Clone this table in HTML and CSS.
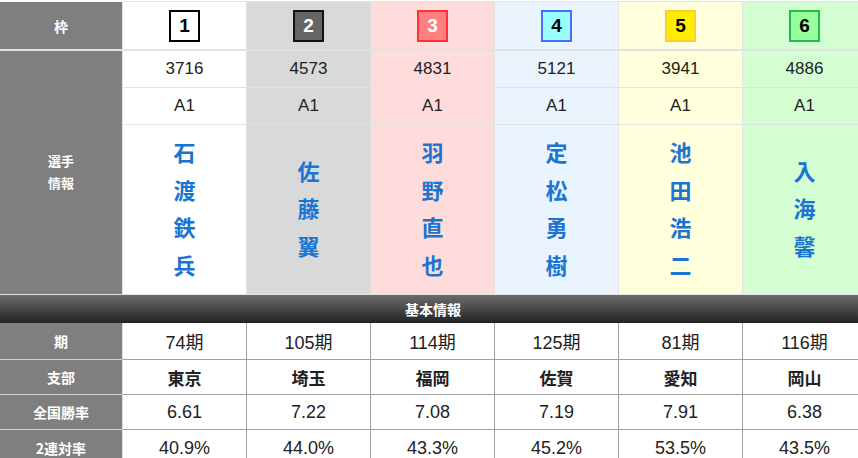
FILE: index.html
```html
<!DOCTYPE html>
<html lang="ja">
<head>
<meta charset="utf-8">
<link rel="stylesheet" href="styles.css">
</head>
<body>
<div class="sheet">
  <div class="lbl head">枠</div>
  <div class="cell head c1"><span class="waku w1">1</span></div>
  <div class="cell head c2"><span class="waku w2">2</span></div>
  <div class="cell head c3"><span class="waku w3">3</span></div>
  <div class="cell head c4"><span class="waku w4">4</span></div>
  <div class="cell head c5"><span class="waku w5">5</span></div>
  <div class="cell head c6"><span class="waku w6">6</span></div>

  <div class="lbl player">選手<br>情報</div>
  <div class="cell sub c1">3716</div>
  <div class="cell sub c2">4573</div>
  <div class="cell sub c3">4831</div>
  <div class="cell sub c4">5121</div>
  <div class="cell sub c5">3941</div>
  <div class="cell sub c6">4886</div>

  <div class="cell sub c1">A1</div>
  <div class="cell sub c2">A1</div>
  <div class="cell sub c3">A1</div>
  <div class="cell sub c4">A1</div>
  <div class="cell sub c5">A1</div>
  <div class="cell sub c6">A1</div>

  <div class="cell name c1"><span class="vert">石渡鉄兵</span></div>
  <div class="cell name c2"><span class="vert">佐藤翼</span></div>
  <div class="cell name c3"><span class="vert">羽野直也</span></div>
  <div class="cell name c4"><span class="vert">定松勇樹</span></div>
  <div class="cell name c5"><span class="vert">池田浩二</span></div>
  <div class="cell name c6"><span class="vert">入海馨</span></div>

  <div class="bar">基本情報</div>

  <div class="lbl low r1">期</div>
  <div class="cell data first r1">74期</div>
  <div class="cell data r1">105期</div>
  <div class="cell data r1">114期</div>
  <div class="cell data r1">125期</div>
  <div class="cell data r1">81期</div>
  <div class="cell data r1">116期</div>

  <div class="lbl low r2">支部</div>
  <div class="cell data first r2 bold">東京</div>
  <div class="cell data r2 bold">埼玉</div>
  <div class="cell data r2 bold">福岡</div>
  <div class="cell data r2 bold">佐賀</div>
  <div class="cell data r2 bold">愛知</div>
  <div class="cell data r2 bold">岡山</div>

  <div class="lbl low r3">全国勝率</div>
  <div class="cell data first r3">6.61</div>
  <div class="cell data r3">7.22</div>
  <div class="cell data r3">7.08</div>
  <div class="cell data r3">7.19</div>
  <div class="cell data r3">7.91</div>
  <div class="cell data r3">6.38</div>

  <div class="lbl low r4">2連対率</div>
  <div class="cell data first r4">40.9%</div>
  <div class="cell data r4">44.0%</div>
  <div class="cell data r4">43.3%</div>
  <div class="cell data r4">45.2%</div>
  <div class="cell data r4">53.5%</div>
  <div class="cell data r4">43.5%</div>
</div>
</body>
</html>
```

FILE: styles.css
```css
html, body {
  margin: 0;
  padding: 0;
  overflow: hidden;
  background: #ffffff;
}

body {
  font-family: "Liberation Sans", Arial, "Noto Sans CJK JP", sans-serif;
  color: #222222;
}

.sheet {
  margin-top: 1px;
  width: 866px;
  display: grid;
  grid-template-columns: 122px repeat(6, 124px);
  grid-template-rows: 50px 37px 37px 170px 28px 37px 35px 35px 37px;
}

.sheet > div {
  box-sizing: border-box;
  display: flex;
  align-items: center;
  justify-content: center;
  text-align: center;
}

.lbl {
  background: #7f7f7f;
  color: #ffffff;
  font-family: "Noto Sans CJK JP", sans-serif;
  font-weight: 700;
  font-size: 13px;
}

.lbl.head {
  border-top: 1px solid #ffffff;
  border-bottom: 2px solid #e2e2e2;
  font-size: 14px;
}

.lbl.player {
  grid-row: span 3;
  line-height: 22px;
  padding-bottom: 2px;
  border-bottom: 1px solid #e2e2e2;
}

.cell {
  border-left: 1px solid #e2e2e2;
}

.cell.head {
  border-top: 1px solid #e2e2e2;
  border-bottom: 2px solid #e2e2e2;
}

.cell.sub {
  font-size: 17px;
  border-bottom: 1px solid #e2e2e2;
}

.cell.name {
  border-bottom: 1px solid #e2e2e2;
  padding-bottom: 3px;
}

.c1 { background: #ffffff; }
.c2 { background: #d9d9d9; }
.c3 { background: #ffdcdc; }
.c4 { background: #eaf4ff; }
.c5 { background: #ffffdc; }
.c6 { background: #d3ffd3; }

.waku {
  box-sizing: border-box;
  width: 31px;
  height: 32px;
  border: 2px solid #000000;
  display: flex;
  align-items: center;
  justify-content: center;
  font-weight: 700;
  font-size: 19px;
  color: #000000;
}

.w1 { background: #ffffff; }
.w2 { background: #666666; color: #ffffff; border-color: #111111; }
.w3 { background: #ff8080; color: #ffffff; border-color: #ff3333; }
.w4 { background: #99ffff; border-color: #4a6cff; }
.w5 { background: #ffee00; border-color: #ffcc33; }
.w6 { background: #99ff99; border-color: #22bb55; }

.vert {
  display: block;
  width: 22px;
  word-break: break-all;
  font-family: "Noto Sans CJK JP", sans-serif;
  font-size: 22px;
  font-weight: 700;
  line-height: 37.5px;
  color: #1a74d2;
}

.bar {
  grid-column: 1 / -1;
  background: linear-gradient(#6c6c6c, #232323);
  color: #ffffff;
  font-family: "Noto Sans CJK JP", sans-serif;
  font-weight: 700;
  font-size: 14px;
}

.lbl.low {
  border-bottom: 1px solid #d0d0d0;
  font-size: 14px;
}

.cell.data {
  background: #ffffff;
  font-size: 18px;
  border-left: 1px solid #a0a0a0;
  border-bottom: 1px solid #a0a0a0;
}

.cell.data.first {
  border-left: 1px solid #dedede;
}

.cell.data.bold {
  font-family: "Noto Sans CJK JP", sans-serif;
  font-weight: 700;
  font-size: 17px;
}
```
